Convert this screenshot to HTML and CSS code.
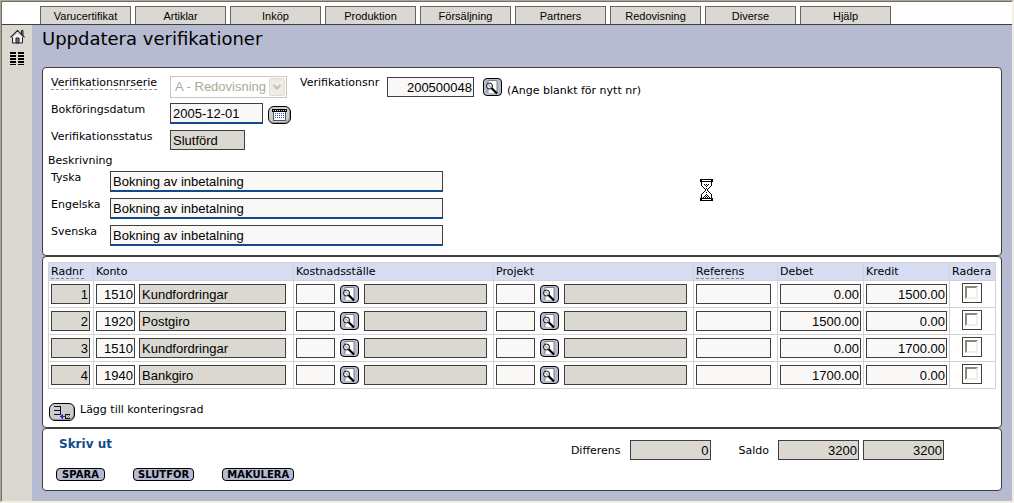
FILE: index.html
```html
<!DOCTYPE html>
<html lang="sv">
<head>
<meta charset="utf-8">
<title>Uppdatera verifikationer</title>
<link rel="stylesheet" href="styles.css">
</head>
<body>
<svg class="defs" aria-hidden="true">
  <symbol id="search" viewBox="0 0 17 16">
    <path d="M4 1h9v13H4z" fill="#fff"/>
    <path d="M4 14V1.500h9V14" fill="none" stroke="#808080"/>
    <circle cx="5.500" cy="7" r="3" fill="#e8eee8" stroke="#111"/>
    <path d="M4 6h1v1h1v1h1v1" fill="none" stroke="#aab" />
    <path d="M7.500 9l5.500 5.500" stroke="#000" stroke-width="2.200"/>
  </symbol>
</svg>
<div class="app">
  <nav class="tabs">
    <button>Varucertifikat</button>
    <button>Artiklar</button>
    <button>Inköp</button>
    <button>Produktion</button>
    <button>Försäljning</button>
    <button>Partners</button>
    <button>Redovisning</button>
    <button>Diverse</button>
    <button>Hjälp</button>
  </nav>
  <div class="body">
    <aside class="side">
      <a href="#" aria-label="Hem"><svg width="15" height="15" viewBox="0 0 15 15">
        <path d="M2.500 7.500v6.500h10V7.500L7.500 3z" fill="#eee" stroke="#222"/>
        <path d="M11.500 5V1.500h1.500V7" fill="#999" stroke="#222"/>
        <path d="M.5 8.500L7.500 1.500l7 7" fill="none" stroke="#222" stroke-width="1.200"/>
        <path d="M2 8.500L7.500 3l5.500 5.500" fill="none" stroke="#fff"/>
        <path d="M6 14V9h3v5z" fill="#777" stroke="#222"/>
      </svg></a>
      <a href="#" aria-label="Lista"><svg width="15" height="13" viewBox="0 0 15 13" shape-rendering="crispEdges">
        <path d="M0 .5h6M8 .5h6M0 3.500h6M8 3.500h6M0 6.500h6M8 6.500h6M0 9.500h6M8 9.500h6M0 12.500h6M8 12.500h6" stroke="#000" stroke-width="2"/>
      </svg></a>
    </aside>
    <main class="main">
      <h1>Uppdatera verifikationer</h1>

      <section class="panel voucher">
        <div class="row">
          <label class="name" for="serie"><span class="hint">Verifikationsnrserie</span></label>
          <span class="select"><select id="serie" disabled><option>A - Redovisning</option></select>
            <svg width="16" height="18" viewBox="0 0 16 18"><rect x=".5" y=".5" width="15" height="17" rx="1" fill="#eeede5" stroke="#dddccf"/><path d="M4.500 7l3.500 3.500L11.500 7" fill="none" stroke="#c2c1b0" stroke-width="2"/></svg></span>
          <label class="number-label" for="nr">Verifikationsnr</label>
          <input id="nr" class="field num w-nr" value="200500048">
          <button class="search" aria-label="Sök verifikation"><svg><use href="#search"/></svg></button>
          <span class="note">(Ange blankt för nytt nr)</span>
        </div>
        <div class="row">
          <label class="name" for="datum">Bokföringsdatum</label>
          <input id="datum" class="field required w-date" value="2005-12-01">
          <button class="tool calendar" aria-label="Kalender"><svg width="15" height="12" viewBox="0 0 15 12" shape-rendering="crispEdges">
            <path d="M0 0h15v3H0z" fill="#000"/><path d="M1 1h1v1H1zM3 1h1v1H3zM5 1h1v1H5zM7 1h1v1H7zM9 1h1v1H9zM11 1h1v1h-1zM13 1h1v1h-1z" fill="#ccc"/>
            <path d="M1.500 3v8.500h12V3" fill="#fff" stroke="#555"/>
            <path d="M3 4.500h9M3 6.500h9M3 8.500h9" stroke="#3049c0" stroke-dasharray="1 1"/>
          </svg></button>
        </div>
        <div class="row">
          <label class="name" for="status">Verifikationsstatus</label>
          <input id="status" class="field locked w-ref" value="Slutförd" readonly>
        </div>
        <h2>Beskrivning</h2>
        <div class="row">
          <label class="lang" for="ty">Tyska</label>
          <input id="ty" class="field required w-desc" value="Bokning av inbetalning">
        </div>
        <div class="row">
          <label class="lang" for="en">Engelska</label>
          <input id="en" class="field required w-desc" value="Bokning av inbetalning">
        </div>
        <div class="row">
          <label class="lang" for="sv">Svenska</label>
          <input id="sv" class="field required w-desc" value="Bokning av inbetalning">
        </div>
        <svg class="wait" width="13" height="22" viewBox="0 0 13 22" shape-rendering="crispEdges" aria-hidden="true">
          <path d="M2 3h9v4L8 10v2l3 3v4H2v-4l3-3v-2L2 7z" fill="#fff"/>
          <path d="M0 0h13v3H0zM0 19h13v3H0z" fill="#000"/>
          <path d="M2 1h9v1H2zM2 20h9v1H2z" fill="#fff"/>
          <path d="M1 3h1v4H1zM11 3h1v4h-1zM2 7h1v1H2zM10 7h1v1h-1zM3 8h1v1H3zM9 8h1v1H9zM4 9h1v1H4zM8 9h1v1H8zM5 10h1v2H5zM7 10h1v2H7zM4 12h1v1H4zM8 12h1v1H8zM3 13h1v1H3zM9 13h1v1H9zM2 14h1v1H2zM10 14h1v1h-1zM1 15h1v4H1zM11 15h1v4h-1z" fill="#000"/>
          <path d="M4 5h1v1H4zM6 5h1v1H6zM8 5h1v1H8zM5 6h1v1H5zM7 6h1v1H7zM6 7h1v1H6zM6 9h1v1H6zM6 13h1v1H6zM6 15h1v1H6zM5 16h1v1H5zM7 16h1v1H7zM4 17h1v1H4zM6 17h1v1H6zM8 17h1v1H8zM3 18h1v1H3zM5 18h1v1H5zM7 18h1v1H7zM9 18h1v1H9z" fill="#000"/>
        </svg>
      </section>

      <section class="panel entries">
        <table>
          <colgroup><col class="c-row"><col class="c-wide"><col class="c-wide"><col class="c-wide"><col class="c-ref"><col class="c-sum"><col class="c-sum"><col class="c-del"></colgroup>
          <thead>
            <tr><th><span class="hint">Radnr</span></th><th>Konto</th><th>Kostnadsställe</th><th>Projekt</th><th><span class="hint">Referens</span></th><th>Debet</th><th>Kredit</th><th>Radera</th></tr>
          </thead>
          <tbody>
            <tr>
              <td><input class="field locked num w-code" aria-label="Radnr" value="1" readonly></td>
              <td><div class="cell"><input class="field num w-code" aria-label="Konto" value="1510"><input class="field locked w-acc" aria-label="Kontonamn" value="Kundfordringar" readonly></div></td>
              <td><div class="cell"><input class="field w-code" aria-label="Kostnadsställe"><button class="search" aria-label="Sök kostnadsställe"><svg><use href="#search"/></svg></button><input class="field locked w-obj" aria-label="Kostnadsställets namn" readonly></div></td>
              <td><div class="cell"><input class="field w-code" aria-label="Projekt"><button class="search" aria-label="Sök projekt"><svg><use href="#search"/></svg></button><input class="field locked w-obj" aria-label="Projektnamn" readonly></div></td>
              <td><input class="field w-ref" aria-label="Referens"></td>
              <td><input class="field num w-sum" aria-label="Debet" value="0.00"></td>
              <td><input class="field num w-sum" aria-label="Kredit" value="1500.00"></td>
              <td class="del"><label class="check"><input type="checkbox" aria-label="Radera"></label></td>
            </tr>
            <tr>
              <td><input class="field locked num w-code" aria-label="Radnr" value="2" readonly></td>
              <td><div class="cell"><input class="field num w-code" aria-label="Konto" value="1920"><input class="field locked w-acc" aria-label="Kontonamn" value="Postgiro" readonly></div></td>
              <td><div class="cell"><input class="field w-code" aria-label="Kostnadsställe"><button class="search" aria-label="Sök kostnadsställe"><svg><use href="#search"/></svg></button><input class="field locked w-obj" aria-label="Kostnadsställets namn" readonly></div></td>
              <td><div class="cell"><input class="field w-code" aria-label="Projekt"><button class="search" aria-label="Sök projekt"><svg><use href="#search"/></svg></button><input class="field locked w-obj" aria-label="Projektnamn" readonly></div></td>
              <td><input class="field w-ref" aria-label="Referens"></td>
              <td><input class="field num w-sum" aria-label="Debet" value="1500.00"></td>
              <td><input class="field num w-sum" aria-label="Kredit" value="0.00"></td>
              <td class="del"><label class="check"><input type="checkbox" aria-label="Radera"></label></td>
            </tr>
            <tr>
              <td><input class="field locked num w-code" aria-label="Radnr" value="3" readonly></td>
              <td><div class="cell"><input class="field num w-code" aria-label="Konto" value="1510"><input class="field locked w-acc" aria-label="Kontonamn" value="Kundfordringar" readonly></div></td>
              <td><div class="cell"><input class="field w-code" aria-label="Kostnadsställe"><button class="search" aria-label="Sök kostnadsställe"><svg><use href="#search"/></svg></button><input class="field locked w-obj" aria-label="Kostnadsställets namn" readonly></div></td>
              <td><div class="cell"><input class="field w-code" aria-label="Projekt"><button class="search" aria-label="Sök projekt"><svg><use href="#search"/></svg></button><input class="field locked w-obj" aria-label="Projektnamn" readonly></div></td>
              <td><input class="field w-ref" aria-label="Referens"></td>
              <td><input class="field num w-sum" aria-label="Debet" value="0.00"></td>
              <td><input class="field num w-sum" aria-label="Kredit" value="1700.00"></td>
              <td class="del"><label class="check"><input type="checkbox" aria-label="Radera"></label></td>
            </tr>
            <tr>
              <td><input class="field locked num w-code" aria-label="Radnr" value="4" readonly></td>
              <td><div class="cell"><input class="field num w-code" aria-label="Konto" value="1940"><input class="field locked w-acc" aria-label="Kontonamn" value="Bankgiro" readonly></div></td>
              <td><div class="cell"><input class="field w-code" aria-label="Kostnadsställe"><button class="search" aria-label="Sök kostnadsställe"><svg><use href="#search"/></svg></button><input class="field locked w-obj" aria-label="Kostnadsställets namn" readonly></div></td>
              <td><div class="cell"><input class="field w-code" aria-label="Projekt"><button class="search" aria-label="Sök projekt"><svg><use href="#search"/></svg></button><input class="field locked w-obj" aria-label="Projektnamn" readonly></div></td>
              <td><input class="field w-ref" aria-label="Referens"></td>
              <td><input class="field num w-sum" aria-label="Debet" value="1700.00"></td>
              <td><input class="field num w-sum" aria-label="Kredit" value="0.00"></td>
              <td class="del"><label class="check"><input type="checkbox" aria-label="Radera"></label></td>
            </tr>
          </tbody>
        </table>
        <div class="add">
          <button class="tool" id="add" aria-label="Lägg till"><svg width="18" height="14" viewBox="0 0 18 14" shape-rendering="crispEdges">
            <path d="M1 1.500h7M1 5.500h7M1 9.500h7M7.500 1v9" stroke="#111" fill="none"/>
            <path d="M7 11h5v1H7zM8 10h1v3H8zM9 9h1v5H9z" fill="#2a22c8"/>
            <path d="M12 9h5v1h-4v3h4v1h-5z" fill="#111"/><path d="M14 10h1v1h-1zM16 10h1v1h-1zM15 11h1v1h-1zM14 12h1v1h-1zM16 12h1v1h-1z" fill="#3fae49"/>
          </svg></button>
          <label for="add">Lägg till konteringsrad</label>
        </div>
      </section>

      <section class="panel footer">
        <div class="actions">
          <a class="print" href="#">Skriv ut</a>
          <div class="buttons">
            <button class="action">SPARA</button>
            <button class="action">SLUTFÖR</button>
            <button class="action">MAKULERA</button>
          </div>
        </div>
        <div class="totals">
          <label for="diff">Differens</label>
          <input id="diff" class="field locked num w-sum" value="0" readonly>
          <label class="saldo" for="saldo">Saldo</label>
          <input id="saldo" class="field locked num w-sum" value="3200" readonly>
          <input class="field locked num w-sum second" aria-label="Saldo kredit" value="3200" readonly>
        </div>
      </section>
    </main>
  </div>
</div>
</body>
</html>
```
FILE: styles.css
```css
* { box-sizing: border-box; }

body {
  margin: 0;
  background: #f1efe2;
  color: #000;
  font: 11px/13px "DejaVu Sans", Verdana, sans-serif;
}

button, input, select { margin: 0; color: inherit; }
svg { display: block; }
.defs { display: none; }

.app {
  display: flex;
  flex-direction: column;
  min-height: 100vh;
  border: 1px solid #aca899;
  border-right: 2px solid #f1efe2;
  border-bottom: 2px solid #f1efe2;
  box-shadow: inset 1px 1px #716f64;
  padding: 1px 0 0 1px;
}

.tabs {
  display: flex;
  gap: 4px;
  padding: 4px 8px 0 38px;
  background: #fff;
  border-bottom: 1px solid #3f3f3f;
}
.tabs button {
  width: 91px;
  height: 18px;
  padding: 0;
  border: 1px solid #666;
  border-bottom: 0;
  background: #dbd8d1;
  font: 11px/16px "Liberation Sans", Arial, sans-serif;
}

.body { display: flex; flex: 1; }
.side {
  display: flex;
  flex-direction: column;
  align-items: center;
  gap: 8px;
  width: 30px;
  padding-top: 4px;
  background: #dbd8d1;
}
.main {
  flex: 1;
  min-width: 0;
  padding: 3px 10px 10px;
  background: #b6bbd2;
}

h1 {
  margin: 0 0 17px;
  font-size: 18px;
  line-height: 22px;
  font-weight: normal;
}
h2 {
  margin: 0 0 3px;
  padding-left: 5px;
  font-size: 11px;
  line-height: 14px;
  font-weight: normal;
}

.panel {
  position: relative;
  border: 1px solid #3f3f3f;
  border-radius: 4px;
  background: #fff;
}

.voucher { padding: 8px 0 0 0; }
.row { display: flex; align-items: flex-start; height: 27px; padding-left: 8px; }
.row:nth-of-type(3) { height: 24px; }
.voucher .row:last-of-type { height: 30px; }
.name { width: 119px; }
.lang { width: 59px; }
.hint { display: inline-block; border-bottom: 1px dashed #888; }

.field {
  display: block;
  height: 20px;
  padding: 0 2px;
  border: 1px solid #3f3f3f;
  border-radius: 0;
  background: #f9f8f7;
  font: 13px/18px "Liberation Sans", Arial, sans-serif;
}
.required { height: 21px; border-bottom: 2px solid #134a8e; }
.locked { background: #dbd8d1; }
.num { padding: 0 1px; text-align: right; }
.w-code { width: 39px; }
.w-ref { width: 75px; }
.w-sum { width: 81px; }
.w-nr { width: 87px; margin-top: 1px; }
.w-date { width: 93px; }
.w-acc { width: 147px; }
.w-obj { width: 123px; }
.w-desc { width: 333px; }

.select { position: relative; width: 117px; }
.select select {
  display: block;
  appearance: none;
  width: 100%;
  height: 22px;
  padding: 0 4px;
  border: 1px solid #c9c7ba;
  border-radius: 0;
  background: #fff;
  color: #aca899;
  font: 13px/20px "Liberation Sans", Arial, sans-serif;
  opacity: 1;
}
.select svg { position: absolute; top: 2px; right: 2px; }
.number-label { margin-left: 13px; width: 87px; white-space: nowrap; }
.note { margin: 8px 0 0 5px; }
.voucher .search { margin: 2px 0 0 9px; }

.search {
  flex: none;
  width: 19px;
  height: 18px;
  padding: 0;
  border: 1px solid #000;
  border-radius: 4px;
  background: #b6bbd2;
}
.search svg { width: 17px; height: 16px; }

.tool {
  display: flex;
  align-items: center;
  justify-content: center;
  width: 26px;
  height: 18px;
  padding: 0;
  border: 1px solid #000;
  border-radius: 6px;
  background: #cccdd2;
  box-shadow: inset -1px -1px #999;
}
.calendar { width: 23px; margin: 3px 0 0 5px; }

.wait { position: absolute; left: 657px; top: 111px; }

.entries { padding: 5px 5px 6px; }
table { width: 100%; border-collapse: collapse; table-layout: fixed; }
.c-row { width: 45px; }
.c-wide { width: 200px; }
.c-ref { width: 84px; }
.c-sum { width: 86px; }
.c-del { width: 46px; }
th, td { border: 1px solid #d2d2d2; text-align: left; font-weight: normal; }
th { height: 18px; padding: 2px 0 1px 2px; background: #d6dcf1; vertical-align: top; }
td { height: 27px; padding: 3px 0 3px 2px; }
.del { padding-top: 2px; vertical-align: top; }
.cell { display: flex; align-items: center; gap: 4px; }
.cell .search { margin-left: 1px; margin-right: 1px; }

.check {
  display: flex;
  width: 20px;
  height: 20px;
  margin-left: 10px;
  padding: 2px;
  border: 1px solid #3f3f3f;
}
.check input {
  appearance: none;
  width: 13px;
  height: 13px;
  border: 2px solid;
  border-color: #8a887a #f1efe2 #f1efe2 #8a887a;
  background: #fff;
}

.add { display: flex; align-items: flex-start; gap: 5px; padding: 14px 0 0 1px; }

.footer { display: flex; justify-content: space-between; height: 63px; padding: 9px 57px 0 13px; }
.print { display: block; padding-left: 3px; color: #134a8e; font-size: 12px; font-weight: bold; text-decoration: none; }
.buttons { display: flex; gap: 28px; margin-top: 17px; }
.action {
  min-width: 49px;
  height: 13px;
  padding: 0 4px;
  border: 1px solid #000;
  border-radius: 4px;
  background: #b6bbd2;
  font: bold 10px/11px "DejaVu Sans", Verdana, sans-serif;
}
.totals { display: flex; align-items: center; height: 20px; margin-top: 2px; }
.totals label { margin-right: 9px; }
.totals .saldo { margin-left: 28px; }
.second { margin-left: 4px; }
```
